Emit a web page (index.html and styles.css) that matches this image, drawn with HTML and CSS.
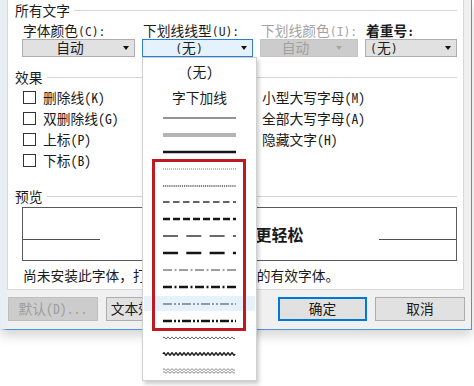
FILE: index.html
```html
<!DOCTYPE html>
<html lang="zh-CN">
<head>
<meta charset="utf-8">
<title>字体</title>
<link rel="stylesheet" href="styles.css">
</head>
<body>
<div class="dialog">
  <div class="panel">
    <div class="group-head"><span>所有文字</span><i class="rule"></i></div>
    <div class="font-grid">
      <div class="lbl">字体颜色<span class="a">(C):</span></div>
      <div class="lbl">下划线线型<span class="a">(U):</span></div>
      <div class="lbl off">下划线颜色<span class="a">(I):</span></div>
      <div class="lbl strong">着重号<span class="a">:</span></div>

      <div class="select"><span class="val">自动</span><span class="arrow"></span></div>
      <div class="select-wrap">
        <div class="select focus"><span class="val"><span class="a">(</span>无<span class="a">)</span></span><span class="arrow"></span></div>
        <div class="dropdown">
          <div class="opt txt first">(无)</div>
          <div class="opt txt second">字下加线</div>
          <div class="opt"><svg class="ln" width="73" height="8" viewBox="0 0 73 8"><line class="s-single" x1="0" y1="4" x2="73" y2="4"/></svg></div>
          <div class="opt"><svg class="ln" width="73" height="8" viewBox="0 0 73 8"><line class="s-double" x1="0" y1="3" x2="73" y2="3"/><line class="s-double" x1="0" y1="5" x2="73" y2="5"/></svg></div>
          <div class="opt"><svg class="ln" width="73" height="8" viewBox="0 0 73 8"><line class="s-thick" x1="0" y1="4" x2="73" y2="4"/></svg></div>
          <div class="opt"><svg class="ln" width="73" height="8" viewBox="0 0 73 8"><line class="s-dot" x1="0" y1="4" x2="73" y2="4"/></svg></div>
          <div class="opt"><svg class="ln" width="73" height="8" viewBox="0 0 73 8"><line class="s-dot-heavy" x1="0" y1="4" x2="73" y2="4"/></svg></div>
          <div class="opt"><svg class="ln" width="73" height="8" viewBox="0 0 73 8"><line class="s-dash" x1="0" y1="4" x2="73" y2="4"/></svg></div>
          <div class="opt"><svg class="ln" width="73" height="8" viewBox="0 0 73 8"><line class="s-dash-heavy" x1="0" y1="4" x2="73" y2="4"/></svg></div>
          <div class="opt"><svg class="ln" width="73" height="8" viewBox="0 0 73 8"><line class="s-long" x1="0" y1="4" x2="73" y2="4"/></svg></div>
          <div class="opt"><svg class="ln" width="73" height="8" viewBox="0 0 73 8"><line class="s-long-heavy" x1="0" y1="4" x2="73" y2="4"/></svg></div>
          <div class="opt"><svg class="ln" width="73" height="8" viewBox="0 0 73 8"><line class="s-dd" x1="0" y1="4" x2="73" y2="4"/></svg></div>
          <div class="opt"><svg class="ln" width="73" height="8" viewBox="0 0 73 8"><line class="s-dd-heavy" x1="0" y1="4" x2="73" y2="4"/></svg></div>
          <div class="opt hl"><svg class="ln" width="73" height="8" viewBox="0 0 73 8"><line class="s-ddd" x1="0" y1="4" x2="73" y2="4"/></svg></div>
          <div class="opt"><svg class="ln" width="73" height="8" viewBox="0 0 73 8"><line class="s-ddd-heavy" x1="0" y1="4" x2="73" y2="4"/></svg></div>
          <div class="opt"><svg class="ln" width="73" height="8" viewBox="0 0 73 8"><path class="s-wave" d="M0 4q1-2.2 2 0t2 0t2 0t2 0t2 0t2 0t2 0t2 0t2 0t2 0t2 0t2 0t2 0t2 0t2 0t2 0t2 0t2 0t2 0t2 0t2 0t2 0t2 0t2 0t2 0t2 0t2 0t2 0t2 0t2 0t2 0t2 0t2 0t2 0t2 0t2 0"/></svg></div>
          <div class="opt"><svg class="ln" width="73" height="8" viewBox="0 0 73 8"><path class="s-wave-heavy" d="M0 4q1-2.4 2 0t2 0t2 0t2 0t2 0t2 0t2 0t2 0t2 0t2 0t2 0t2 0t2 0t2 0t2 0t2 0t2 0t2 0t2 0t2 0t2 0t2 0t2 0t2 0t2 0t2 0t2 0t2 0t2 0t2 0t2 0t2 0t2 0t2 0t2 0t2 0"/></svg></div>
          <div class="opt"><svg class="ln" width="73" height="8" viewBox="0 0 73 8"><path class="s-wave-double" d="M0 2.6q1-1.8 2 0t2 0t2 0t2 0t2 0t2 0t2 0t2 0t2 0t2 0t2 0t2 0t2 0t2 0t2 0t2 0t2 0t2 0t2 0t2 0t2 0t2 0t2 0t2 0t2 0t2 0t2 0t2 0t2 0t2 0t2 0t2 0t2 0t2 0t2 0t2 0"/><path class="s-wave-double" d="M0 5.4q1-1.8 2 0t2 0t2 0t2 0t2 0t2 0t2 0t2 0t2 0t2 0t2 0t2 0t2 0t2 0t2 0t2 0t2 0t2 0t2 0t2 0t2 0t2 0t2 0t2 0t2 0t2 0t2 0t2 0t2 0t2 0t2 0t2 0t2 0t2 0t2 0t2 0"/></svg></div>
          <div class="redbox"></div>
        </div>
      </div>
      <div class="select off"><span class="val">自动</span><span class="arrow"></span></div>
      <div class="select left"><span class="val"><span class="a">(</span>无<span class="a">)</span></span><span class="arrow"></span></div>
    </div>

    <div class="group-head gap-effects"><span>效果</span><i class="rule"></i></div>
    <div class="effects">
      <div class="chk"><span class="box"></span>删除线(K)</div>
      <div class="chk"><span class="box"></span>小型大写字母(M)</div>
      <div class="chk"><span class="box"></span>双删除线(G)</div>
      <div class="chk"><span class="box"></span>全部大写字母(A)</div>
      <div class="chk"><span class="box"></span>上标(P)</div>
      <div class="chk"><span class="box"></span>隐藏文字(H)</div>
      <div class="chk"><span class="box"></span>下标(B)</div>
    </div>

    <div class="group-head gap-preview"><span>预览</span><i class="rule"></i></div>
    <div class="preview">
      <i class="base"></i>
      <span class="sample">让你的工作更轻松</span>
      <i class="base"></i>
    </div>
    <div class="note">尚未安装此字体，打印时将使用最相近的有效字体。</div>
  </div>

  <div class="actions">
    <div class="btn disabled">默认(D)...</div>
    <div class="btn wide">文本效果(E)...</div>
    <div class="btn primary">确定</div>
    <div class="btn">取消</div>
  </div>
</div>
</body>
</html>
```

FILE: styles.css
```css
* {
  box-sizing: border-box;
  margin: 0;
  padding: 0;
}

html, body {
  background: #ffffff;
}

body {
  margin: 0;
  min-height: 100vh;
  font-family: "Noto Sans Mono CJK SC", "Noto Sans CJK SC", sans-serif;
  font-size: 13.75px;
  line-height: 1;
  color: #1b1b1b;
}

.dialog {
  width: 472px;
  background: #f0f0f0;
  border-left: 7px solid #e9eef3;
  border-right: 1px solid #4f94d8;
  border-bottom: 1px solid #4f94d8;
  box-shadow: 0 6px 10px rgba(0, 0, 0, 0.16);
}

.panel {
  width: 457px;
  background: #ffffff;
  border: 1px solid #d9d9d9;
  border-top: 0;
  padding: 0 6px 4px 7px;
}

.group-head {
  display: flex;
  align-items: center;
  height: 20px;
  line-height: 20px;
}

.group-head .rule {
  flex: 1;
  height: 1px;
  background: #d4d4d4;
  margin-left: 4px;
}

.gap-effects {
  margin-top: 10px;
}

.gap-preview {
  margin-top: 15px;
}

/* font row */
.font-grid {
  display: grid;
  grid-template-columns: 113px 111px 98px 1fr;
  column-gap: 7px;
  margin: 2px 0 0 7px;
}

.lbl,
.select .val {
  font-family: "Liberation Mono", "Noto Sans Mono CJK SC", "Noto Sans CJK SC", monospace;
}

.a {
  font-family: "DejaVu Sans Mono", monospace;
  font-size: 11.42px;
}

.lbl {
  height: 17px;
  line-height: 17px;
  padding: 2px 0 0 1px;
  white-space: nowrap;
}

.lbl.off {
  color: #a3a3a3;
}

.lbl.strong {
  font-weight: 700;
}

.select {
  height: 18px;
  border: 1px solid #adadad;
  background: #e1e1e1;
  display: flex;
  align-items: center;
}

.select .val {
  flex: 1;
  text-align: center;
  white-space: nowrap;
  line-height: 16px;
  padding-top: 3px;
}

.select .arrow {
  width: 17px;
  display: flex;
  justify-content: center;
}

.select .arrow::before {
  content: "";
  border-left: 3.5px solid transparent;
  border-right: 3.5px solid transparent;
  border-top: 4px solid #111;
}

.select.focus {
  border-color: #2f7fd0;
  background: #e5f1fb;
}

.select.off {
  background: #cccccc;
  border-color: #c4c4c4;
  color: #a0a0a0;
}

.select.off .arrow {
  margin-right: 10px;
}

.select.off .arrow::before {
  border-top-color: #a6a6a6;
}

.select.left .val {
  text-align: left;
  padding-left: 4px;
}

/* dropdown list */
.select-wrap {
  position: relative;
}

.dropdown {
  position: absolute;
  top: 100%;
  left: 0;
  width: 115px;
  background: #ffffff;
  border: 1px solid #cfcfcf;
  padding: 0 1px;
  box-shadow: 2px 3px 4px rgba(0, 0, 0, 0.2);
  z-index: 10;
}

.opt {
  height: 16.9px;
  display: flex;
  align-items: center;
  justify-content: center;
}

.opt.txt {
  white-space: nowrap;
}

.opt.first {
  height: 28.5px;
}

.opt.second {
  height: 23px;
}

.opt.hl {
  background: #e5f1fb;
  background-clip: content-box;
  padding: 1px 0;
}

.ln {
  display: block;
  overflow: visible;
}

.ln line,
.ln path {
  fill: none;
}

.s-single { stroke: #2a2a2a; stroke-width: 1.1; }
.s-double { stroke: #6a6a6a; stroke-width: 1; }
.s-thick { stroke: #151515; stroke-width: 2.4; }
.s-dot { stroke: #7a7a7a; stroke-width: 1; stroke-dasharray: 1 1; }
.s-dot-heavy { stroke: #555555; stroke-width: 1.6; stroke-dasharray: 1.2 0.9; }
.s-dash { stroke: #333333; stroke-width: 1.4; stroke-dasharray: 6.5 3.5; }
.s-dash-heavy { stroke: #151515; stroke-width: 2.6; stroke-dasharray: 7 3; }
.s-long { stroke: #3a3a3a; stroke-width: 1.3; stroke-dasharray: 15 8.3; }
.s-long-heavy { stroke: #151515; stroke-width: 2.6; stroke-dasharray: 15 8.3; }
.s-dd { stroke: #444444; stroke-width: 1.2; stroke-dasharray: 9 2.5 2 2.5; }
.s-dd-heavy { stroke: #151515; stroke-width: 2.6; stroke-dasharray: 9 2.5 2 2.5; }
.s-ddd { stroke: #444444; stroke-width: 1.2; stroke-dasharray: 9 2 2 2 2 2; }
.s-ddd-heavy { stroke: #151515; stroke-width: 2.6; stroke-dasharray: 9 2 2 2 2 2; }
.s-wave { stroke: #6a6a6a; stroke-width: 1; }
.s-wave-heavy { stroke: #1a1a1a; stroke-width: 1.5; }
.s-wave-double { stroke: #7a7a7a; stroke-width: 0.9; }

.redbox {
  position: absolute;
  left: 9px;
  top: 101px;
  width: 94px;
  height: 172px;
  border: 3px solid #bd1a22;
}

/* effects */
.effects {
  display: grid;
  grid-template-columns: 219px 1fr;
  grid-auto-rows: 21px;
  margin-left: 7px;
}

.chk {
  display: flex;
  align-items: center;
  gap: 7px;
  padding-left: 1px;
  white-space: nowrap;
}

.box {
  width: 13px;
  height: 13px;
  border: 1px solid #333333;
  background: #ffffff;
  flex: none;
}

/* preview */
.preview {
  height: 54px;
  margin: 1px 0 0 7px;
  border: 1px solid #5a5a5a;
  display: flex;
  justify-content: space-between;
}

.preview .base {
  width: 77px;
  height: 1px;
  background: #505050;
  margin-top: 31px;
}

.preview .sample {
  align-self: center;
  font-family: "Noto Sans CJK SC", sans-serif;
  font-weight: 700;
  font-size: 16px;
  line-height: 20px;
  white-space: nowrap;
}

.note {
  margin: 4px 0 0 8px;
  line-height: 20px;
  height: 20px;
  white-space: nowrap;
}

/* buttons */
.actions {
  display: flex;
  height: 39px;
  padding: 7px 6px 8px 1px;
  gap: 8px;
}

.btn {
  width: 90px;
  height: 24px;
  border: 1px solid #adadad;
  background: #e1e1e1;
  display: flex;
  align-items: center;
  justify-content: center;
  white-space: nowrap;
}

.btn.wide {
  width: 106px;
}

.btn.disabled {
  background: #cccccc;
  border-color: #bfbfbf;
  color: #9d9d9d;
}

.btn.primary {
  margin-left: auto;
  width: 89px;
  border-color: #0078d7;
  box-shadow: inset 0 0 0 1px #0078d7;
}
```
